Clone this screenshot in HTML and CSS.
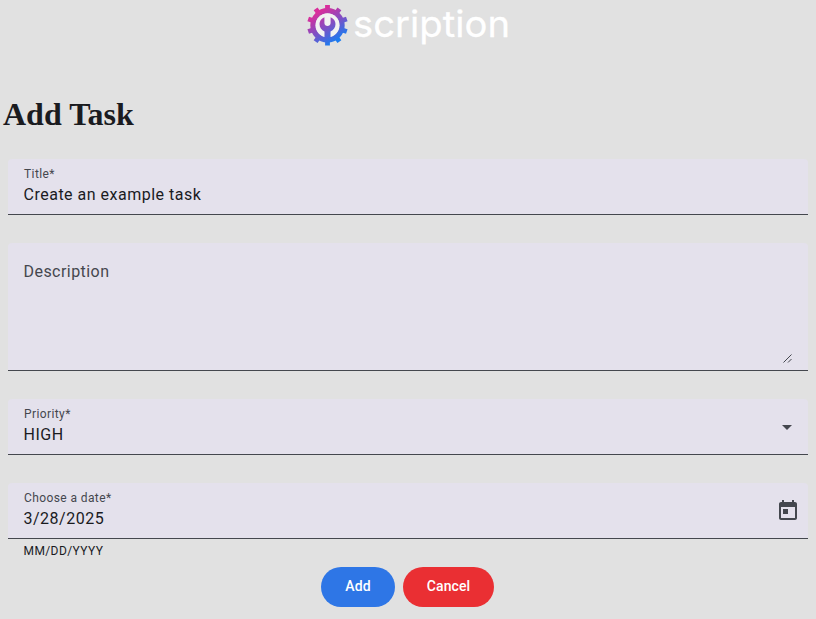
FILE: index.html
```html
<!DOCTYPE html>
<html lang="en">
<head>
<meta charset="utf-8">
<title>Add Task</title>
<link rel="stylesheet" href="styles.css">
</head>
<body>
<header class="logo">
  <svg class="logo-mark" width="41" height="42" viewBox="-20.5 -21.3 41 42" aria-hidden="true">
    <defs>
      <linearGradient id="brand" gradientUnits="userSpaceOnUse" x1="-8" y1="-14" x2="10" y2="15">
        <stop offset="0" stop-color="#d92d9b"/>
        <stop offset=".5" stop-color="#7f4fc4"/>
        <stop offset="1" stop-color="#1b7bf0"/>
      </linearGradient>
    </defs>
    <g stroke="url(#brand)" fill="none">
      <circle r="14.5" stroke-width="5.4"/>
      <path stroke-width="4.8" d="M0-20.3L.01-15M11.9-16.4L9-12.4M19.3-6.3L14.6-4.7M19.3 6.3L14.6 4.7M11.9 16.4L9 12.4M0 20.3L.01 15M-11.9 16.4L-9 12.4M-19.3 6.3L-14.6 4.7M-19.3-6.3L-14.6-4.7M-11.9-16.4L-9-12.4"/>
    </g>
    <circle r="12" fill="#f2f2f2"/>
    <path fill="url(#brand)" d="M-3.1-8V-2.2C-3.1-.4-1.6 .7 0 .7S3.1-.4 3.1-2.2V-8C6.3-6.8 8-4.2 8-1.2C8 2.4 6 5 3 6.2V15H-3V6.2C-6 5-8 2.4-8-1.2C-8-4.2-6.3-6.8-3.1-8Z"/>
  </svg>
  <svg class="logo-name" width="162" height="50"><text x="1" y="37" textLength="157" lengthAdjust="spacingAndGlyphs">scription</text></svg>
</header>
<h1>Add Task</h1>
<form class="task-form">
  <div class="field">
    <div class="text"><span class="label">Title*</span><span class="value">Create an example task</span></div>
  </div>
  <div class="field area">
    <span class="placeholder">Description</span>
    <svg class="grip" width="9" height="9" viewBox="0 0 9 9"><path d="M.5 8.5l8-8M5 8.5l3.5-3.5"/></svg>
  </div>
  <div class="field">
    <div class="text"><span class="label">Priority*</span><span class="value">HIGH</span></div>
    <svg class="arrow" width="10" height="5" viewBox="0 0 10 5"><path d="M0 0h10L5 5z"/></svg>
  </div>
  <div class="field">
    <div class="text"><span class="label">Choose a date*</span><span class="value">3/28/2025</span></div>
    <svg class="calendar" width="24" height="24" viewBox="0 0 24 24"><path d="M19 3h-1V1h-2v2H8V1H6v2H5c-1.11 0-1.99.9-1.99 2L3 19c0 1.1.89 2 2 2h14c1.1 0 2-.9 2-2V5c0-1.1-.9-2-2-2zm0 16H5V8h14v11zM7 10h5v5H7z"/></svg>
  </div>
  <div class="hint">MM/DD/YYYY</div>
  <div class="actions">
    <button class="btn add" type="button">Add</button>
    <button class="btn cancel" type="button">Cancel</button>
  </div>
</form>
</body>
</html>
```
FILE: styles.css
```css
* { box-sizing: border-box; }
body {
  margin: 0;
  height: 619px;
  overflow: hidden;
  background: #e1e1e1;
  color: #1a1b1f;
  font-family: Roboto, sans-serif;
}
.logo {
  display: flex;
  height: 50px;
  padding: 0 0 0 307px;
}
.logo-mark { flex: none; margin-top: 4px; }
.logo-name {
  margin: 0 0 0 4px;
  overflow: visible;
  fill: #fff;
  stroke: #fff;
  stroke-width: .3px;
  font: 37px Inter, sans-serif;
}
h1 {
  margin: 46px 0 0 3px;
  font: bold 32px/36px "Liberation Serif", serif;
}
.task-form { padding: 27px 8px 0; }
.field {
  display: flex;
  justify-content: space-between;
  height: 56px;
  margin-bottom: 28px;
  padding: 0 16px;
  border-bottom: 1px solid #44474e;
  border-radius: 4px 4px 0 0;
  background: #e4e1ec;
  color: #44474e;
}
.text { display: flex; flex-direction: column; padding-top: 7px; }
.label { font-size: 12px; line-height: 16px; letter-spacing: .4px; }
.value {
  margin: 1px 0 0 -.5px;
  color: #1a1b1f;
  font-size: 16px;
  line-height: 24px;
  letter-spacing: .5px;
}
.area { height: 128px; }
.placeholder { padding-top: 17px; margin-left: -.5px; font-size: 16px; line-height: 24px; letter-spacing: .45px; }
.grip { align-self: flex-end; margin-bottom: 7px; fill: none; stroke: #44474e; }
.arrow { margin: 26px 0 0; fill: #44474e; }
.calendar { margin: 16px -8px 0 0; fill: #44474e; }
.hint {
  margin: -24px 15.5px 0;
  font-size: 12px;
  line-height: 16px;
  letter-spacing: .4px;
}
.actions { display: flex; gap: 8px; margin: 8px 0 0 313px; }
.btn {
  height: 40px;
  padding: 0 0 2px;
  border: 0;
  border-radius: 20px;
  color: #fff;
  font: 500 14px/20px Roboto, sans-serif;
  letter-spacing: .1px;
}
.add { width: 74px; background: #2e76e6; }
.cancel { width: 91px; background: #ea2f33; }
```
